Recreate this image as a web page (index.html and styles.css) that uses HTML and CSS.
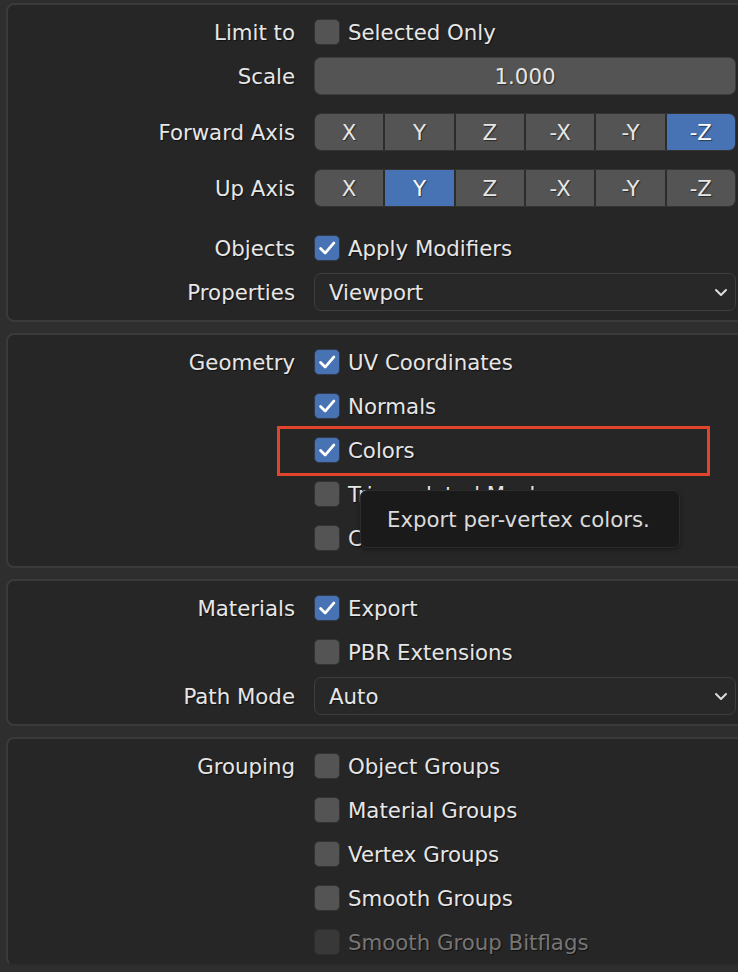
FILE: index.html
```html
<!DOCTYPE html>
<html>
<head>
<meta charset="utf-8">
<link rel="stylesheet" href="styles.css">
</head>
<body>
<div class="page">
  <section class="panel p1">
    <div class="row"><div class="label">Limit to</div><div class="ctl"><span class="cb"></span><span class="txt">Selected Only</span></div></div>
    <div class="row"><div class="label">Scale</div><div class="ctl"><div class="num">1.000</div></div></div>
    <div class="row gap12"><div class="label">Forward Axis</div><div class="ctl"><div class="seg"><span>X</span><span>Y</span><span>Z</span><span>-X</span><span>-Y</span><span class="on">-Z</span></div></div></div>
    <div class="row gap12"><div class="label">Up Axis</div><div class="ctl"><div class="seg"><span>X</span><span class="on">Y</span><span>Z</span><span>-X</span><span>-Y</span><span>-Z</span></div></div></div>
    <div class="row gap16"><div class="label">Objects</div><div class="ctl"><span class="cb on"><svg viewBox="0 0 26 26"><path d="M6 13.5 L11 18.5 L20.5 7.5"/></svg></span><span class="txt">Apply Modifiers</span></div></div>
    <div class="row"><div class="label">Properties</div><div class="ctl"><div class="drop"><span>Viewport</span><svg viewBox="0 0 14 10"><path d="M2 3 L7 8 L12 3"/></svg></div></div></div>
  </section>

  <section class="panel p2">
    <div class="row"><div class="label">Geometry</div><div class="ctl"><span class="cb on"><svg viewBox="0 0 26 26"><path d="M6 13.5 L11 18.5 L20.5 7.5"/></svg></span><span class="txt">UV Coordinates</span></div></div>
    <div class="row"><div class="label"></div><div class="ctl"><span class="cb on"><svg viewBox="0 0 26 26"><path d="M6 13.5 L11 18.5 L20.5 7.5"/></svg></span><span class="txt">Normals</span></div></div>
    <div class="row"><div class="label"></div><div class="ctl"><span class="cb on"><svg viewBox="0 0 26 26"><path d="M6 13.5 L11 18.5 L20.5 7.5"/></svg></span><span class="txt">Colors</span></div></div>
    <div class="row"><div class="label"></div><div class="ctl"><span class="cb"></span><span class="txt">Triangulated Mesh</span></div></div>
    <div class="row"><div class="label"></div><div class="ctl"><span class="cb"></span><span class="txt">Curves as NURBS</span></div></div>
    <div class="highlight"></div>
    <div class="tooltip">Export per-vertex colors.</div>
  </section>

  <section class="panel p3">
    <div class="row"><div class="label">Materials</div><div class="ctl"><span class="cb on"><svg viewBox="0 0 26 26"><path d="M6 13.5 L11 18.5 L20.5 7.5"/></svg></span><span class="txt">Export</span></div></div>
    <div class="row"><div class="label"></div><div class="ctl"><span class="cb"></span><span class="txt">PBR Extensions</span></div></div>
    <div class="row"><div class="label">Path Mode</div><div class="ctl"><div class="drop"><span>Auto</span><svg viewBox="0 0 14 10"><path d="M2 3 L7 8 L12 3"/></svg></div></div></div>
  </section>

  <section class="panel p4">
    <div class="row"><div class="label">Grouping</div><div class="ctl"><span class="cb"></span><span class="txt">Object Groups</span></div></div>
    <div class="row"><div class="label"></div><div class="ctl"><span class="cb"></span><span class="txt">Material Groups</span></div></div>
    <div class="row"><div class="label"></div><div class="ctl"><span class="cb"></span><span class="txt">Vertex Groups</span></div></div>
    <div class="row"><div class="label"></div><div class="ctl"><span class="cb"></span><span class="txt">Smooth Groups</span></div></div>
    <div class="row disabled"><div class="label"></div><div class="ctl"><span class="cb"></span><span class="txt">Smooth Group Bitflags</span></div></div>
  </section>
</div>
</body>
</html>
```

FILE: styles.css
```css
html, body {
  margin: 0;
  padding: 0;
  background: #2e2e2e;
  overflow: hidden;
}
body {
  width: 738px;
  height: 972px;
  font-family: "DejaVu Sans", "Liberation Sans", sans-serif;
  font-size: 21.3px;
  color: #e6e6e6;
}
.page {
  padding: 3px 0 0 6px;
  display: flex;
  flex-direction: column;
  gap: 11px;
}
.panel {
  position: relative;
  background: #262626;
  border: 2px solid #3a3a3a;
  border-radius: 8px;
  margin-right: -20px;
  padding: 5px 0 6px 0;
}
.p4 {
  padding-bottom: 0;
  border-bottom-color: #2b2b2b;
}
.row {
  display: flex;
  align-items: center;
  height: 44px;
}
.gap12 { margin-top: 12px; }
.gap16 { margin-top: 16px; }
.label {
  width: 287px;
  flex: none;
  text-align: right;
  text-shadow: 1px 1px 1px rgba(0,0,0,0.6);
  white-space: nowrap;
}
.ctl {
  margin-left: 19px;
  width: 422px;
  display: flex;
  align-items: center;
}
.txt {
  margin-left: 8px;
  text-shadow: 1px 1px 1px rgba(0,0,0,0.6);
  white-space: nowrap;
}
.cb {
  width: 26px;
  height: 26px;
  flex: none;
  box-sizing: border-box;
  border: 1px solid #333333;
  border-radius: 5px;
  background: #545454;
  display: flex;
  align-items: center;
  justify-content: center;
}
.cb.on {
  background: #4772b3;
  border-color: #2f3a4a;
}
.cb svg {
  width: 26px;
  height: 26px;
}
.cb svg path {
  fill: none;
  stroke: #ffffff;
  stroke-width: 3;
  stroke-linecap: round;
  stroke-linejoin: round;
}
.disabled .txt { color: #767676; }
.disabled .cb { background: #383838; border-color: #2e2e2e; }
.num {
  width: 100%;
  height: 38px;
  box-sizing: border-box;
  background: #545454;
  border: 1px solid #3d3d3d;
  border-radius: 7px;
  display: flex;
  align-items: center;
  justify-content: center;
  text-shadow: 1px 1px 1px rgba(0,0,0,0.5);
}
.seg {
  width: 100%;
  height: 38px;
  box-sizing: border-box;
  display: flex;
  gap: 2px;
  background: #2c2c2c;
  border: 1px solid #333333;
  border-radius: 7px;
  overflow: hidden;
}
.seg span {
  flex: 1;
  background: #545454;
  display: flex;
  align-items: center;
  justify-content: center;
  text-shadow: 1px 1px 1px rgba(0,0,0,0.5);
}
.seg span.on {
  background: #4772b3;
  color: #ffffff;
}
.drop {
  width: 100%;
  height: 38px;
  box-sizing: border-box;
  background: #282828;
  border: 1px solid #3e3e3e;
  border-radius: 7px;
  display: flex;
  align-items: center;
  justify-content: space-between;
  padding: 0 7px 0 14px;
  text-shadow: 1px 1px 1px rgba(0,0,0,0.5);
}
.drop svg {
  width: 14px;
  height: 10px;
}
.drop svg path {
  fill: none;
  stroke: #dcdcdc;
  stroke-width: 2;
  stroke-linecap: round;
  stroke-linejoin: round;
}
.highlight {
  position: absolute;
  left: 269px;
  top: 91px;
  width: 427px;
  height: 44px;
  border: 3px solid #e2432b;
}
.tooltip {
  position: absolute;
  left: 352px;
  top: 155px;
  width: 320px;
  height: 58px;
  box-sizing: border-box;
  background: #1a1a1a;
  border: 1px solid #2c2c2c;
  border-radius: 7px;
  box-shadow: 0 2px 4px rgba(0,0,0,0.35);
  color: #dadada;
  display: flex;
  align-items: center;
  padding-left: 26px;
  white-space: nowrap;
}
```
